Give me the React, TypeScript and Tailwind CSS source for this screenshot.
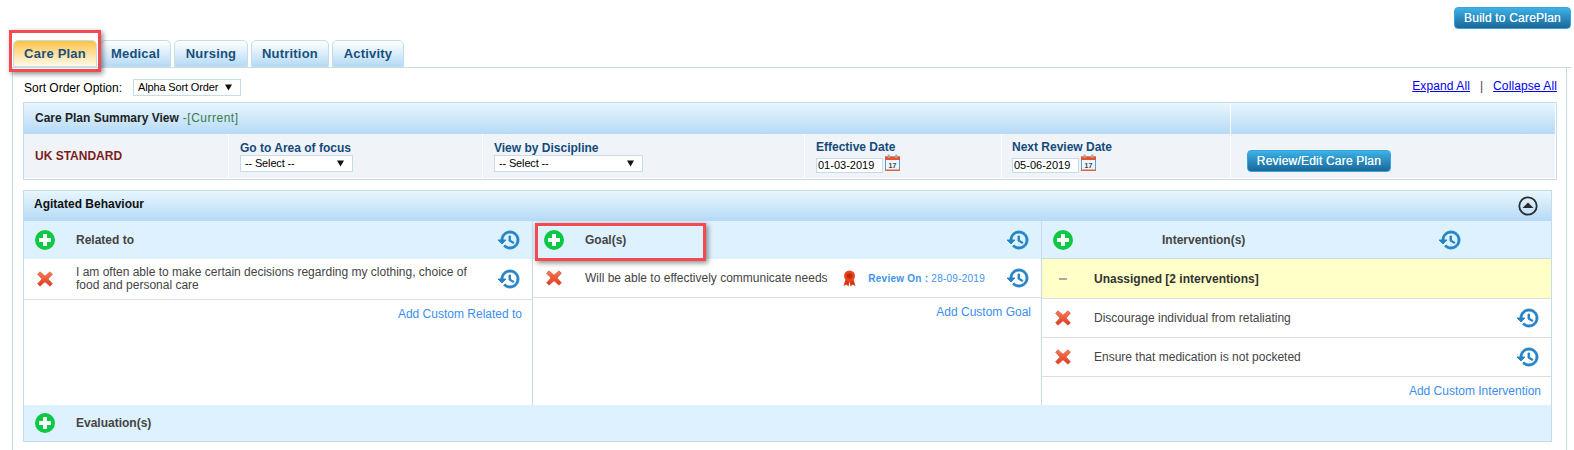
const PlusIcon = () => (
  <svg width="20" height="20" viewBox="0 0 20 20">
    <circle cx="10" cy="10" r="10" fill="#0bc845" />
    <path d="M8 4h4v4h4v4h-4v4H8v-4H4V8h4z" fill="#fff" />
  </svg>
);

const RemoveIcon = () => (
  <svg width="16" height="16" viewBox="0 0 16 16">
    <defs>
      <linearGradient id="xfill" x1="0" y1="0" x2="0" y2="1">
        <stop offset="0" stopColor="#fb7a55" />
        <stop offset="1" stopColor="#e23a1c" />
      </linearGradient>
    </defs>
    <path
      d="M3 .8 8 5.2 13 .8 15.4 3.2 11 8 15.4 12.8 13 15.2 8 10.8 3 15.2.6 12.8 5 8 .6 3.2z"
      fill="url(#xfill)"
      stroke="#c9482e"
      strokeWidth="0.6"
    />
  </svg>
);

const History = () => (
  <svg width="24" height="24" viewBox="0 0 24 24" fill="#2583c7" stroke="#2583c7" strokeWidth="0.9">
    <path d="M13 3c-4.97 0-9 4.03-9 9H1l3.89 3.89.07.14L9 12H6c0-3.87 3.13-7 7-7s7 3.13 7 7-3.13 7-7 7c-1.93 0-3.68-.79-4.94-2.06l-1.42 1.42C8.27 19.99 10.51 21 13 21c4.97 0 9-4.03 9-9s-4.03-9-9-9zm-1 5v5l4.28 2.54.72-1.21-3.5-2.08V8H12z" />
  </svg>
);

const Ribbon = () => (
  <svg width="15" height="17" viewBox="0 0 15 17">
    <path d="M4 8 1.5 16 4.5 14.5 6.5 16.5 7.5 11 8.5 16.5 10.5 14.5 13.5 16 11 8z" fill="#d9340f" />
    <circle cx="7.5" cy="6" r="5.5" fill="#e8461a" />
    <circle cx="7.5" cy="6" r="2.8" fill="#b92c0c" />
  </svg>
);

const CalendarIcon = () => (
  <svg width="15" height="17" viewBox="0 0 15 17">
    <rect x="0.5" y="3" width="14" height="13.5" fill="#eef6fc" stroke="#5d9ccb" />
    <rect x="0" y="2.5" width="15" height="3.5" fill="#e8532f" />
    <rect x="0" y="15.5" width="15" height="1.5" fill="#d9663f" />
    <rect x="2.5" y="0.5" width="2.5" height="3.5" rx="1" fill="#a9a9a9" />
    <rect x="10" y="0.5" width="2.5" height="3.5" rx="1" fill="#a9a9a9" />
    <text x="7.5" y="14" textAnchor="middle" fontSize="7" fill="#444" fontFamily="Liberation Sans">
      17
    </text>
  </svg>
);

const CollapseIcon = () => (
  <svg width="20" height="20" viewBox="0 0 20 20">
    <circle cx="10" cy="10" r="8.7" fill="none" stroke="#2b2b2b" strokeWidth="1.8" />
    <path d="M4.5 12 10 6.5 15.5 12z" fill="#2b2b2b" />
  </svg>
);

const Select = ({ label, width }: { label: string; width: string }) => (
  <div className={`flex h-[17px] items-center justify-between border border-[#c4dde9] bg-white pl-[4px] pr-[8px] text-[11px] font-normal tracking-[-0.15px] text-black ${width}`}>
    <span>{label}</span>
    <svg width="7" height="7" viewBox="0 0 7 7">
      <path d="M0 .5h7L3.5 6.5z" fill="#111" />
    </svg>
  </div>
);

const DateField = ({ value }: { value: string }) => (
  <div className="flex items-end gap-[2px]">
    <div className="flex h-[15px] w-[67px] items-center border border-[#c4dde9] bg-white pl-px text-[11px] font-normal text-black">
      {value}
    </div>
    <div className="mb-[2px]">
      <CalendarIcon />
    </div>
  </div>
);

const BlueButton = ({ label, width }: { label: string; width: string }) => (
  <button className={`h-[22px] rounded-[4px] border border-[#3aa3dc] bg-gradient-to-b from-[#3cb2e8] to-[#1a6898] text-[12px] font-normal tracking-[0.2px] text-[#f2f8fc] [text-shadow:0_0_0.6px_#ffffff] ${width}`}>
    {label}
  </button>
);

const tabs = [
  { name: 'Medical', width: 'w-[71px]' },
  { name: 'Nursing', width: 'w-[74px]' },
  { name: 'Nutrition', width: 'w-[78px]' },
  { name: 'Activity', width: 'w-[72px]' },
];

const ColHeader = ({ title }: { title: string }) => (
  <div className="flex h-[38px] items-center bg-[#def1fe] text-[12px] font-bold text-[#444]">
    <div className="ml-[11px] mr-[11px] flex w-[20px] justify-center">
      <PlusIcon />
    </div>
    <div className="flex-1 pl-[10px]">{title}</div>
    <div className="flex w-[46px] justify-center">
      <History />
    </div>
  </div>
);

const ItemRow = ({ text, height, extra }: { text: React.ReactNode; height: string; extra?: React.ReactNode }) => (
  <div className={`flex items-center border-b border-[#dcdfe2] bg-white text-[12px] leading-[13px] text-[#444] ${height}`}>
    <div className="flex w-[42px] justify-center">
      <RemoveIcon />
    </div>
    <div className="ml-[10px] flex-1">{text}</div>
    {extra}
    <div className="flex w-[46px] justify-center">
      <History />
    </div>
  </div>
);

const AddLink = ({ label, pt }: { label: string; pt: string }) => (
  <div className={`pr-[10px] text-right text-[12px] text-[#3a8ef0] ${pt}`}>{label}</div>
);

export default function App() {
  return (
    <div className="relative h-[450px] w-[1574px] overflow-hidden bg-white font-['Liberation_Sans',Arial,sans-serif]">
      <div className="flex h-[40px] justify-end pr-[3px] pt-[7px]">
        <BlueButton label="Build to CarePlan" width="w-[117px]" />
      </div>

      <div className="ml-[12px] mr-[3px] flex h-[28px] gap-[3px] border-b border-[#c4dde9] pl-px text-[13px] font-bold tracking-[0.2px] text-[#1a4f7a]">
        <div className="flex h-[27px] w-[84px] items-center justify-center rounded-t-[5px] border border-[#c4dde9] bg-gradient-to-b from-[#fdc33b] to-[#fff9e6]">
          Care Plan
        </div>
        {tabs.map((tab) => (
          <div
            key={tab.name}
            className={`flex h-[27px] items-center justify-center rounded-t-[5px] border border-[#c4dde9] bg-gradient-to-b from-[#ffffff] to-[#b5daf6] ${tab.width}`}
          >
            {tab.name}
          </div>
        ))}
      </div>

      <div className="ml-[12px] mr-[7px] h-[383px] border-x border-[#c4dde9] pl-[10px]">
        <div className="flex h-[34px] items-center justify-between pr-[9px] pt-[5px] text-[12px]">
          <div className="flex items-center gap-[11px] pl-px text-black">
            <span>Sort Order Option:</span>
            <Select label="Alpha Sort Order" width="w-[108px]" />
          </div>
          <div className="mb-[4px] flex items-center text-[#444]">
            <a className="tracking-[0.1px] text-[#0000ee] underline">Expand All</a>
            <span className="mx-[10px]">|</span>
            <a className="tracking-[0.1px] text-[#0000ee] underline">Collapse All</a>
          </div>
        </div>

        <div className="mr-[9px] h-[78px] border border-[#c4dde9] bg-white pr-px">
          <div className="flex h-[31px] bg-gradient-to-b from-[#e8f6fe] to-[#b5daf6]">
            <div className="flex w-[1207px] items-center border-r border-white pb-[2px] pl-[11px] text-[12px] font-bold text-[#222]">
              Care Plan Summary View
              <span className="ml-[4px] font-normal tracking-[0.5px] text-[#3f7a4a]">-[Current]</span>
            </div>
          </div>
          <div className="flex h-[44px] bg-[#f0f4f8] text-[12px] font-bold text-[#134a7a]">
            <div className="flex w-[205px] items-center border-r border-white pl-[11px] text-[#7b1d1d]">UK STANDARD</div>
            <div className="w-[254px] border-r border-white pl-[11px] pt-[7px]">
              <div className="h-[14px] leading-[14px]">Go to Area of focus</div>
              <Select label="-- Select --" width="w-[113px]" />
            </div>
            <div className="w-[322px] border-r border-white pl-[11px] pt-[7px]">
              <div className="h-[14px] leading-[14px]">View by Discipline</div>
              <Select label="-- Select --" width="w-[149px]" />
            </div>
            <div className="w-[197px] border-r border-white pl-[11px] pt-[6px]">
              <div className="h-[14px] leading-[14px]">Effective Date</div>
              <DateField value="01-03-2019" />
            </div>
            <div className="w-[229px] border-r border-white pl-[10px] pt-[6px]">
              <div className="h-[14px] leading-[14px]">Next Review Date</div>
              <DateField value="05-06-2019" />
            </div>
            <div className="flex-1 pl-[16px] pt-[16px]">
              <BlueButton label="Review/Edit Care Plan" width="w-[144px]" />
            </div>
          </div>
        </div>

        <div className="mr-[14px] mt-[10px] h-[252px] border border-[#c4dde9]">
          <div className="flex h-[30px] items-center justify-between bg-gradient-to-b from-[#e8f6fe] to-[#b5daf6] pl-[10px] pr-[13px] text-[12px] font-bold text-[#111]">
            <span className="pb-[5px]">Agitated Behaviour</span>
            <CollapseIcon />
          </div>

          <div className="grid h-[184px] grid-cols-[509px_509px_1fr]">
            <div className="border-r border-[#c4dde9]">
              <ColHeader title="Related to" />
              <ItemRow
                height="h-[41px]"
                text={
                  <span className="block w-[392px]">
                    I am often able to make certain decisions regarding my clothing, choice of food and personal care
                  </span>
                }
              />
              <AddLink label="Add Custom Related to" pt="pt-[5px]" />
            </div>

            <div className="border-r border-[#c4dde9]">
              <ColHeader title="Goal(s)" />
              <ItemRow
                height="h-[39px]"
                text="Will be able to effectively communicate needs"
                extra={
                  <div className="flex items-center">
                    <Ribbon />
                    <span className="ml-[11px] mr-[10px] text-[10px] tracking-[0.25px] text-[#3d94ee]">
                      <b>Review On :</b> 28-09-2019
                    </span>
                  </div>
                }
              />
              <AddLink label="Add Custom Goal" pt="pt-[5px]" />
            </div>

            <div>
              <div className="flex h-[38px] items-center border-b border-[#c4dde9] bg-[#def1fe] text-[12px] font-bold text-[#444]">
                <div className="ml-[11px] flex w-[20px] justify-center">
                  <PlusIcon />
                </div>
                <div className="ml-[89px] w-[276px]">Intervention(s)</div>
                <History />
              </div>
              <div className="flex h-[40px] items-center border-b border-[#dcdfe2] bg-[#ffffc8] text-[12px] font-bold text-[#333]">
                <div className="ml-[17px] mr-[27px] h-[2px] w-[8px] bg-[#a8a8a8]" />
                Unassigned [2 interventions]
              </div>
              <ItemRow height="h-[39px]" text="Discourage individual from retaliating" />
              <ItemRow height="h-[39px]" text="Ensure that medication is not pocketed" />
              <AddLink label="Add Custom Intervention" pt="pt-[5px]" />
            </div>
          </div>

          <div className="flex h-[36px] items-center bg-[#def1fe] text-[12px] font-bold text-[#444]">
            <div className="ml-[11px] mr-[21px] flex w-[20px] justify-center">
              <PlusIcon />
            </div>
            Evaluation(s)
          </div>
        </div>
      </div>

      {/* red callouts drawn over the page */}
      <div className="absolute left-[9px] top-[30px] h-[42px] w-[92px] border-[3px] border-[#f44a4f] shadow-[2px_2px_5px_rgba(0,0,0,0.45)]" />
      <div className="absolute left-[535px] top-[223px] h-[38px] w-[171px] border-[3px] border-[#f44a4f] shadow-[2px_2px_5px_rgba(0,0,0,0.45)]" />
    </div>
  );
}
